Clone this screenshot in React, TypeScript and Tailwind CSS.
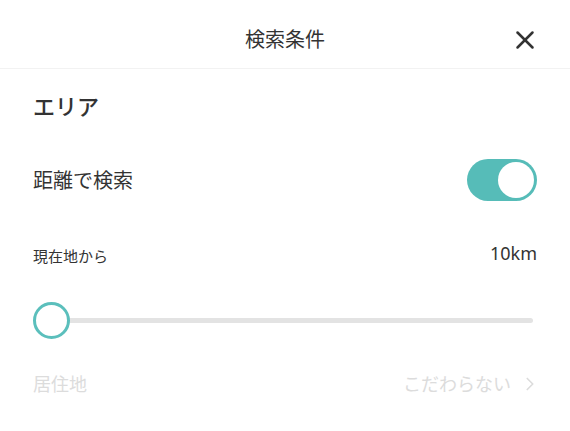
import { X, ChevronRight } from 'lucide-react'

export default function App() {
  return (
    <div
      className="w-[570px] h-[431px] bg-white text-[#333] overflow-hidden"
      style={{ fontFamily: '"Noto Sans CJK JP", "Noto Sans", sans-serif' }}
    >
      <header className="relative h-[69px] flex items-center justify-center border-b border-[#f2f2f2]">
        <h1 className="text-[20px] font-normal pt-[10px]">検索条件</h1>
        <button className="absolute right-[30px] top-[25px] text-[#333]">
          <X size={30} strokeWidth={2} />
        </button>
      </header>

      <div className="px-[33px]">
        <h2 className="text-[22px] font-medium mt-[19px] leading-[34px]">エリア</h2>

        <div className="flex items-center justify-between mt-[37px]">
          <span className="text-[20px] font-normal">距離で検索</span>
          <div className="w-[70px] h-[42px] rounded-full bg-[#56bcb8] flex items-center justify-end pr-[3px]">
            <div className="w-[36px] h-[36px] rounded-full bg-white" />
          </div>
        </div>

        <div className="flex items-end justify-between mt-[39px]">
          <span className="text-[15px] font-normal">現在地から</span>
          <span className="text-[18px] font-normal" style={{ fontFamily: '"Noto Sans", sans-serif' }}>10km</span>
        </div>

        <div className="relative h-[40px] mt-[33px] flex items-center">
          <div className="ml-[18px] mr-[4px] flex-1 h-[5px] rounded-full bg-[#e3e3e3]" />
          <div className="absolute left-0 top-[2px] w-[37px] h-[37px] rounded-full bg-white border-[3px] border-[#5bbfbc]" />
        </div>

        <div className="flex items-center justify-between mt-[30px] text-[#dcdcdc]">
          <span className="text-[18px]">居住地</span>
          <span className="flex items-center gap-[8px] text-[18px]">
            こだわらない
            <ChevronRight size={22} strokeWidth={1.8} className="-mr-[4px]" />
          </span>
        </div>
      </div>
    </div>
  )
}
